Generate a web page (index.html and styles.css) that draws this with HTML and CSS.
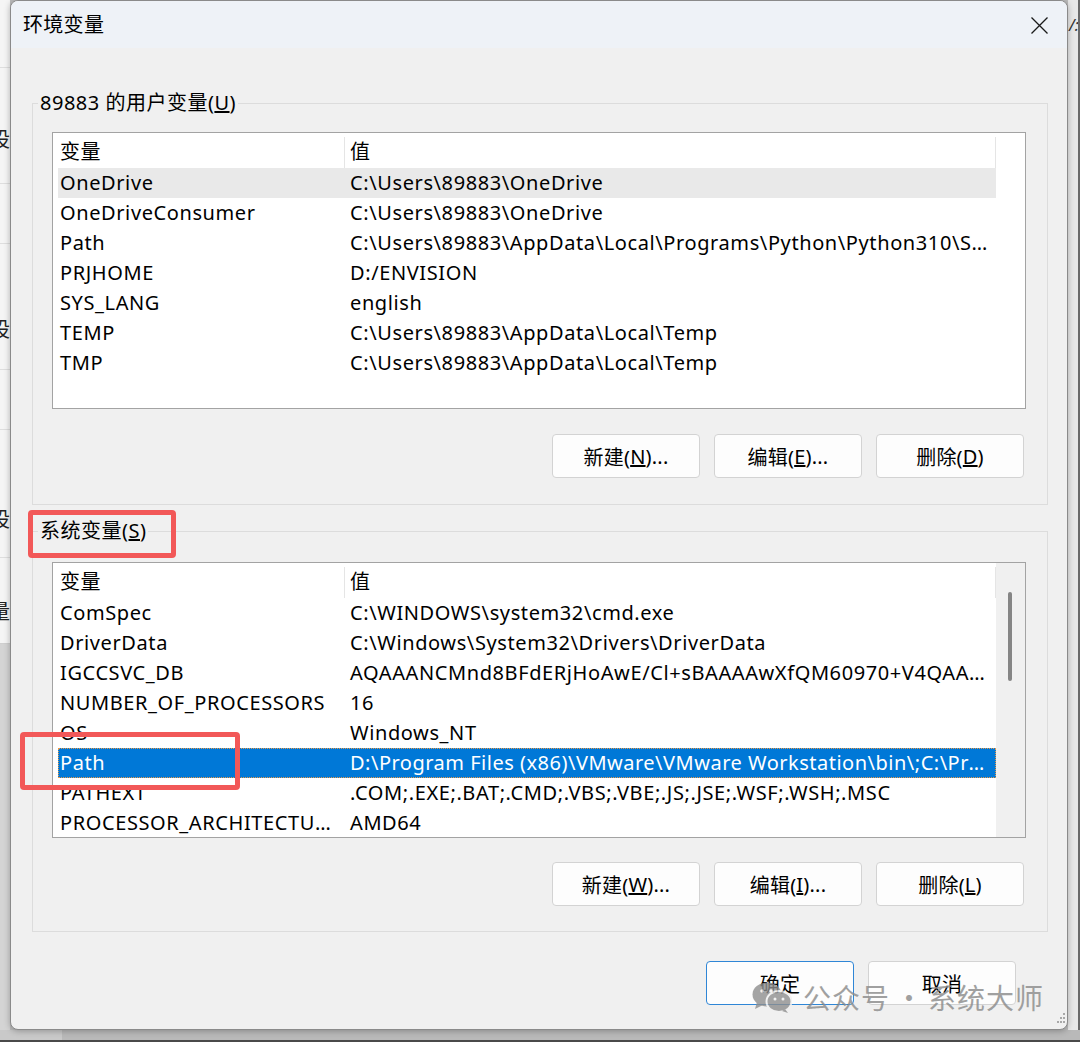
FILE: index.html
```html
<!DOCTYPE html>
<html lang="zh-CN">
<head>
<meta charset="utf-8">
<title>环境变量</title>
<link rel="stylesheet" href="styles.css">
</head>
<body>
<div class="screen">
  <div class="bg-left">
    <div class="bl bl-a"></div>
    <div class="bl bl-b"><span class="bl-ch">设</span></div>
    <div class="bl bl-c"></div>
    <div class="bl bl-d"><span class="bl-ch">设</span></div>
    <div class="bl bl-c"></div>
    <div class="bl bl-e"><span class="bl-ch">设</span></div>
    <div class="bl bl-f"><span class="bl-ch">量</span></div>
    <div class="bl-grey"></div>
  </div>

  <div class="dialog">
    <div class="titlebar">
      <span class="title">环境变量</span>
      <svg class="close" width="17" height="17" viewBox="0 0 17 17"><path d="M0.5 0.5 L16.5 16.5 M16.5 0.5 L0.5 16.5" stroke="#1a1a1a" stroke-width="1.3" fill="none"/></svg>
    </div>

    <div class="content">
      <fieldset class="group group-user">
        <legend>89883 的用户变量(<u>U</u>)</legend>
        <div class="group-body">
          <div class="list list-user">
            <div class="rows">
              <div class="row head"><div class="c1">变量</div><div class="c2">值</div></div>
              <div class="row hover"><div class="c1">OneDrive</div><div class="c2">C:\Users\89883\OneDrive</div></div>
              <div class="row"><div class="c1">OneDriveConsumer</div><div class="c2">C:\Users\89883\OneDrive</div></div>
              <div class="row"><div class="c1">Path</div><div class="c2">C:\Users\89883\AppData\Local\Programs\Python\Python310\Scripts\;C:\Users\89883\AppData</div></div>
              <div class="row"><div class="c1">PRJHOME</div><div class="c2">D:/ENVISION</div></div>
              <div class="row"><div class="c1">SYS_LANG</div><div class="c2">english</div></div>
              <div class="row"><div class="c1">TEMP</div><div class="c2">C:\Users\89883\AppData\Local\Temp</div></div>
              <div class="row"><div class="c1">TMP</div><div class="c2">C:\Users\89883\AppData\Local\Temp</div></div>
            </div>
            <div class="vspace"></div>
          </div>
          <div class="btns">
            <div class="btn">新建(<u>N</u>)...</div>
            <div class="btn">编辑(<u>E</u>)...</div>
            <div class="btn">删除(<u>D</u>)</div>
          </div>
        </div>
      </fieldset>

      <fieldset class="group group-sys">
        <legend>系统变量(<u>S</u>)</legend>
        <div class="group-body">
          <div class="list list-sys">
            <div class="rows">
              <div class="row head"><div class="c1">变量</div><div class="c2">值</div></div>
              <div class="row"><div class="c1">ComSpec</div><div class="c2">C:\WINDOWS\system32\cmd.exe</div></div>
              <div class="row"><div class="c1">DriverData</div><div class="c2">C:\Windows\System32\Drivers\DriverData</div></div>
              <div class="row"><div class="c1">IGCCSVC_DB</div><div class="c2">AQAAANCMnd8BFdERjHoAwE/Cl+sBAAAAwXfQM60970+V4QAAAAAAAAA</div></div>
              <div class="row"><div class="c1">NUMBER_OF_PROCESSORS</div><div class="c2">16</div></div>
              <div class="row"><div class="c1">OS</div><div class="c2">Windows_NT</div></div>
              <div class="row selected"><div class="c1">Path</div><div class="c2">D:\Program Files (x86)\VMware\VMware Workstation\bin\;C:\Program Files</div></div>
              <div class="row"><div class="c1">PATHEXT</div><div class="c2">.COM;.EXE;.BAT;.CMD;.VBS;.VBE;.JS;.JSE;.WSF;.WSH;.MSC</div></div>
              <div class="row"><div class="c1">PROCESSOR_ARCHITECTURE</div><div class="c2">AMD64</div></div>
            </div>
            <div class="vscroll"><div class="thumb"></div></div>
          </div>
          <div class="btns">
            <div class="btn">新建(<u>W</u>)...</div>
            <div class="btn">编辑(<u>I</u>)...</div>
            <div class="btn">删除(<u>L</u>)</div>
          </div>
        </div>
      </fieldset>

      <div class="footer">
        <div class="btn default">确定</div>
        <div class="btn">取消</div>
      </div>
    </div>

    <div class="mark mark-sys"></div>
    <div class="mark mark-path"></div>

    <div class="watermark">
      <svg class="wx" width="40" height="31" viewBox="0 0 40 31">
        <ellipse cx="15" cy="12.5" rx="14.5" ry="12" fill="#8e8e8e"/>
        <path d="M5 20 L3 27 L11 23 Z" fill="#8e8e8e"/>
        <ellipse cx="27" cy="19.5" rx="12.5" ry="10.5" fill="#8e8e8e" stroke="#f0f0f0" stroke-width="2"/>
        <path d="M33 27 L36 31 L30 29 Z" fill="#8e8e8e"/>
        <circle cx="10" cy="9" r="1.8" fill="#f0f0f0"/>
        <circle cx="19" cy="9" r="1.8" fill="#f0f0f0"/>
        <circle cx="23" cy="17" r="1.5" fill="#f0f0f0"/>
        <circle cx="31" cy="17" r="1.5" fill="#f0f0f0"/>
      </svg>
      <span class="wm-text">公众号<span class="wm-dot">·</span>系统大师</span>
    </div>

    <svg class="grip" width="9" height="15" viewBox="0 0 9 15">
      <rect x="6" y="2" width="2" height="2" fill="#a8a8a8"/>
      <rect x="3" y="6" width="2" height="2" fill="#a8a8a8"/>
      <rect x="6" y="6" width="2" height="2" fill="#a8a8a8"/>
      <rect x="0" y="10" width="2" height="2" fill="#a8a8a8"/>
      <rect x="3" y="10" width="2" height="2" fill="#a8a8a8"/>
      <rect x="6" y="10" width="2" height="2" fill="#a8a8a8"/>
    </svg>
  </div>

  <div class="bg-right">
    <span class="br-text">/:</span>
  </div>
</div>
<div class="bottom-band"><div class="bb-left"></div></div>
</body>
</html>
```

FILE: styles.css
```css
* { box-sizing: border-box; }
html, body { margin: 0; padding: 0; }
body {
  width: 1080px;
  height: 1042px;
  overflow: hidden;
  background: #bdbdbd;
  font-family: "Noto Sans", "Noto Sans CJK SC", sans-serif;
  color: #000;
}
.screen { display: flex; height: 1030px; }

/* background window on the left */
.bg-left {
  width: 10px;
  flex: none;
  background: #f5f5f5;
  display: flex;
  flex-direction: column;
  overflow: hidden;
}
.bl { border-bottom: 1px solid #dedede; flex: none; }
.bl-a { height: 68px; }
.bl-b { height: 116px; }
.bl-c { height: 60px; }
.bl-d { height: 126px; }
.bl-e { height: 128px; }
.bl-f { height: 86px; border-bottom-color: #cfcfcf; }
.bl-ch {
  display: block;
  font-size: 20px;
  line-height: 24px;
  margin-left: -10px;
  color: #222;
}
.bl-b .bl-ch { margin-top: 60px; }
.bl-d .bl-ch { margin-top: 74px; }
.bl-e .bl-ch { margin-top: 78px; }
.bl-f .bl-ch { margin-top: 42px; }
.bl-grey { flex: 1; background: #d4d4d4; }

/* dialog */
.dialog {
  width: 1058px;
  flex: none;
  height: 1030px;
  background: #f0f0f0;
  border: 1px solid #8a8a8a;
  border-radius: 8px;
  box-shadow: 0 1px 6px rgba(0,0,0,0.28);
  display: flex;
  flex-direction: column;
  position: relative;
  overflow: hidden;
  z-index: 1;
}
.titlebar {
  height: 47px;
  flex: none;
  background: #eef2f7;
  display: flex;
  align-items: center;
  justify-content: space-between;
  padding: 0 19px 0 12px;
}
.title { font-size: 20px; line-height: 24px; letter-spacing: 0.3px; }
.close { display: block; margin-top: 1px; }

.content { padding: 43px 19px 0 21px; display: flex; flex-direction: column; }

.group {
  margin: 0;
  padding: 0;
  border: 1px solid #dcdcdc;
  min-width: 0;
}
.group legend {
  margin-left: 5px;
  padding: 0 2px;
  font-size: 20px;
  line-height: 24px;
  letter-spacing: 0.5px;
}
.group-body { padding: 17px 21px 26px 19px; }
.group-sys { margin-top: 14px; }
.group-sys .group-body { padding-top: 19px; padding-bottom: 25px; }

.list {
  border: 1px solid #a3a3a3;
  background: #fff;
  display: flex;
  overflow: hidden;
}
.list-user { height: 277px; }
.list-sys { height: 276px; }
.rows { width: 943px; flex: none; padding-left: 5px; }
.vspace { flex: 1; }
.vscroll { flex: 1; background: #f0f0f0; padding: 29px 0 0 12px; }
.thumb { width: 4px; height: 89px; background: #858585; border-radius: 2px; }

.row {
  display: flex;
  height: 30px;
  line-height: 30px;
  font-size: 20px;
  letter-spacing: 0.6px;
  white-space: nowrap;
}
.row .c1 {
  width: 287px;
  flex: none;
  padding: 0 8px 0 2px;
  overflow: hidden;
  text-overflow: ellipsis;
}
.row .c2 {
  width: 651px;
  flex: none;
  padding: 0 5px 0 5px;
  overflow: hidden;
  text-overflow: ellipsis;
}
.row.head { height: 35px; padding-top: 4px; }
.row.head .c1 { border-right: 1px solid #e5e5e5; }
.row.head .c2 { border-right: 1px solid #e5e5e5; }
.row.hover { background: #e9e9e9; }
.row.selected {
  background: #0078d7;
  color: #fff;
  outline: 1px dotted #e89a4a;
  outline-offset: -1px;
}
.row.selected .c2 { letter-spacing: 0.5px; }

.btns {
  display: flex;
  justify-content: flex-end;
  gap: 14px;
  margin-top: 25px;
  padding-right: 2px;
}
.group-sys .btns { margin-top: 24px; }
.btn {
  width: 148px;
  height: 44px;
  background: #fdfdfd;
  border: 1px solid #d3d3d3;
  border-radius: 4px;
  font-size: 20px;
  display: flex;
  align-items: center;
  justify-content: center;
  letter-spacing: 0.2px;
}
.btn.default { border-color: #2f86d6; }
.footer {
  display: flex;
  justify-content: flex-end;
  gap: 14px;
  margin-top: 29px;
  padding-right: 32px;
}

/* annotation overlays */
.mark {
  position: absolute;
  border: 5px solid #f25858;
  border-radius: 4px;
}
.mark-sys { left: 17px; top: 509px; width: 148px; height: 48px; }
.mark-path { left: 9px; top: 731px; width: 220px; height: 58px; }

.watermark {
  position: absolute;
  left: 741px;
  top: 978px;
  display: flex;
  align-items: center;
  gap: 11px;
  opacity: 0.8;
}
.wx { display: block; }
.wm-text {
  font-family: "Noto Sans CJK SC", sans-serif;
  font-size: 28px;
  line-height: 36px;
  color: #8a8a8a;
  letter-spacing: 1px;
}
.wm-dot { display: inline-block; width: 38px; text-align: center; letter-spacing: 0; }
.grip { position: absolute; left: 1046px; top: 1010px; }

/* right background strip */
.bg-right {
  width: 12px;
  flex: none;
  background: #e8e8e8;
  border-right: 2px solid #6a6a6a;
  overflow: hidden;
}
.br-text {
  display: block;
  font-size: 16px;
  font-style: italic;
  color: #333;
  margin-top: 14px;
  margin-left: 1px;
}

.bottom-band {
  height: 12px;
  border-bottom: 2px solid #4a4a4a;
  background: #b9b9b9;
}
.bb-left { width: 62px; height: 10px; background: #c9c9c9; }
```
